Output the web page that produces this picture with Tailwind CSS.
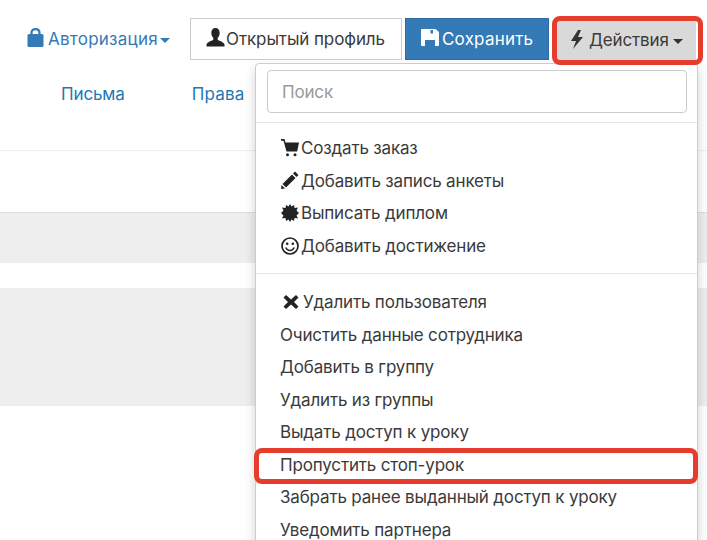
<!DOCTYPE html>
<html lang="en">
<head>
    <meta charset="UTF-8">
    <title>Действия</title>
    <script src="https://cdn.jsdelivr.net/npm/@tailwindcss/browser@4"></script>
</head>
<body class="bg-white">
<div class="relative w-[707px] h-[540px] overflow-hidden font-['Inter',sans-serif] text-[17px] text-[#3a3a3a]">

    <!-- Top bar -->
    <div class="flex items-center h-[42px] mt-[18px] pl-[27px] absolute top-0 left-0">
        <a class="flex items-center text-[#337ab7] w-[163px]">
            <svg class="w-[17px] h-[19px] mr-[4px] -mt-[3px]" viewBox="0 0 17 19"><path fill="none" stroke="#337ab7" stroke-width="2.200" d="M4.500 8V5C4.500 2.500 6 1.200 8.500 1.200S12.500 2.500 12.500 5V8"/><rect x="0.500" y="6" width="16" height="13" rx="1.500" fill="#337ab7"/></svg>
            <span class="tracking-[0.25px] pt-[1px]">Авторизация</span>
            <span class="ml-[2px] mt-[3px] border-x-[5px] border-t-[5px] border-x-transparent border-t-[#337ab7]"></span>
        </a>
        <button class="flex items-center h-[42px] w-[212px] pl-[15px] border border-[#ccc] bg-white tracking-[-0.1px]">
            <svg class="w-[19px] h-[19px] mr-[1px] -mt-[3px]" viewBox="0 0 19 19"><path fill="#222" d="M9.500 0C6.800 0 5.300 2 5.300 5c0 2 .9 3.800 2 4.800v2C5.500 13 1.500 14 .5 16.500V18.500h18v-2C17.500 14 13.500 13 11.700 11.800v-2c1.100-1 2-2.800 2-4.800C13.700 2 12.200 0 9.500 0z"/></svg>
            <span class="pt-[1px]">Открытый профиль</span>
        </button>
        <button class="flex items-center h-[42px] w-[144px] ml-[3px] pl-[15px] bg-[#337ab7] border border-[#2e6da4] text-white tracking-[0.2px]">
            <svg class="w-[18px] h-[17px] mr-[3px] -mt-[3px]" viewBox="0 0 18 17"><path fill="#fff" fill-rule="evenodd" d="M1 0h13.500L18 3V16a1 1 0 0 1-1 1H1a1 1 0 0 1-1-1V1a1 1 0 0 1 1-1zM9.500 1v3.500h2.500V1zM4 11v6h10v-6z"/></svg>
            <span class="pt-[1px]">Сохранить</span>
        </button>
    </div>
    <button class="absolute left-[556px] top-[21px] w-[140px] h-[39px] flex items-center pl-[14px] bg-[#d9d9d9] tracking-[-0.15px]">
        <svg class="w-[14px] h-[19px] mr-[5px] -mt-[2px]" viewBox="0 0 14 19"><path fill="#333" d="M8 0 1 11h5l-3 8 10-12H8l3-7z"/></svg>
        Действия
        <span class="ml-[4px] mt-[2px] border-x-[5px] border-t-[5px] border-x-transparent border-t-[#333]"></span>
    </button>

    <!-- Tabs -->
    <div class="absolute top-[82px] left-[61px] flex gap-[67px] text-[#2277b5]">
        <a class="tracking-[-0.15px]">Письма</a>
        <a class="tracking-[0.2px]">Права</a>
    </div>

    <!-- Page behind the menu -->
    <div class="absolute top-[150px] left-0 w-full h-[1px] bg-[#eee]"></div>
    <div class="absolute top-[212px] left-0 w-full h-[51px] bg-[#eee] border-t border-[#ddd]"></div>
    <div class="absolute top-[288px] left-0 w-full h-[118px] bg-[#eee]"></div>

    <!-- Dropdown -->
    <div class="absolute left-[255px] top-[63px] w-[443px] h-[500px] bg-white border border-[#ccc] rounded-[4px] shadow-[0_6px_12px_rgba(0,0,0,0.18)] tracking-[-0.17px]">
        <div class="pl-[11px] pr-[10px] pt-[6px] pb-[9px] border-b border-[#e5e5e5]">
            <div class="h-[43px] border border-[#ccc] rounded-[4px] flex items-center pl-[14px] pt-[2px] text-[#999]">Поиск</div>
        </div>
        <ul class="pt-[9px] pb-[11px] border-b border-[#e5e5e5]">
            <li class="flex items-center h-[32.600px] pl-[25px]">
                <svg class="w-[18px] h-[18px] mr-[2px] -mt-[1px]" viewBox="0 0 18 18"><path fill="#222" d="M0 0h3.500l1 3.500H18l-1.800 9H5.500L2.500 1.800H0z"/><circle cx="6.500" cy="15.800" r="1.500" fill="#222"/><circle cx="14" cy="15.800" r="1.500" fill="#222"/></svg>
                Создать заказ
            </li>
            <li class="flex items-center h-[32.600px] pl-[25px] pt-[1px]">
                <svg class="w-[18px] h-[18px] mr-[2px] -mt-[2px]" viewBox="0 0 18 18"><path fill="#222" d="M14 .5 17.500 4 15.500 6 12 2.500zM11 3.500 14.500 7 5 16.500 1.500 13zM.5 14l3.500 3.500L0 18z"/></svg>
                Добавить запись анкеты
            </li>
            <li class="flex items-center h-[32.600px] pl-[25px]">
                <svg class="w-[18px] h-[18px] mr-[2px] -mt-[1px]" viewBox="0 0 18 18"><path fill="#222" d="M9 0l1.500 2.500L13 1l.5 3L17 3.500 15.500 6.500 18 9l-2.500 2.500 1.500 3-3.500-.5L13 17l-2.500-1.500L9 18l-1.500-2.500L5 17l-.5-3-3.500.5 1.500-3L0 9l2.500-2.500L1 3.500 4.500 4 5 1l2.500 1.500z"/></svg>
                Выписать диплом
            </li>
            <li class="flex items-center h-[32.600px] pl-[25px] pt-[1px]">
                <svg class="w-[18px] h-[18px] mr-[2px] -mt-[2px]" viewBox="0 0 18 18"><circle cx="9" cy="9" r="8" fill="none" stroke="#222" stroke-width="1.700"/><circle cx="6.200" cy="6.800" r="1.300" fill="#222"/><circle cx="11.800" cy="6.800" r="1.300" fill="#222"/><path d="M4.800 10.500c.8 2 2.300 3 4.200 3s3.400-1 4.200-3" fill="none" stroke="#222" stroke-width="1.500"/></svg>
                Добавить достижение
            </li>
        </ul>
        <ul class="pt-[12px]">
            <li class="flex items-center h-[32.600px] pl-[25px]">
                <svg class="w-[16px] h-[16px] ml-[2px] mr-[4px] -mt-[1px]" viewBox="0 0 16 16"><path fill="#222" d="M3 1 8 5.500 13 1 15.500 3.500 11 8l4.500 4.500L13 15 8 10.500 3 15 .5 12.500 5 8 .5 3.500z"/></svg>
                Удалить пользователя
            </li>
            <li class="flex items-center h-[32.600px] pl-[24px]">Очистить данные сотрудника</li>
            <li class="flex items-center h-[32.600px] pl-[24px]">Добавить в группу</li>
            <li class="flex items-center h-[32.600px] pl-[24px]">Удалить из группы</li>
            <li class="flex items-center h-[32.600px] pl-[24px]">Выдать доступ к уроку</li>
            <li class="flex items-center h-[32.600px] pl-[24px]">Пропустить стоп-урок</li>
            <li class="flex items-center h-[32.600px] pl-[24px]">Забрать ранее выданный доступ к уроку</li>
            <li class="flex items-center h-[32.600px] pl-[24px]">Уведомить партнера</li>
        </ul>
    </div>

    <!-- Red callouts -->
    <div class="absolute left-[552px] top-[16px] w-[151px] h-[49px] border-[5px] border-[#e53c2e] rounded-[8px]"></div>
    <div class="absolute left-[254px] top-[448px] w-[444px] h-[36px] border-[5px] border-[#e53c2e] rounded-[8px]"></div>
</div>
</body>
</html>
